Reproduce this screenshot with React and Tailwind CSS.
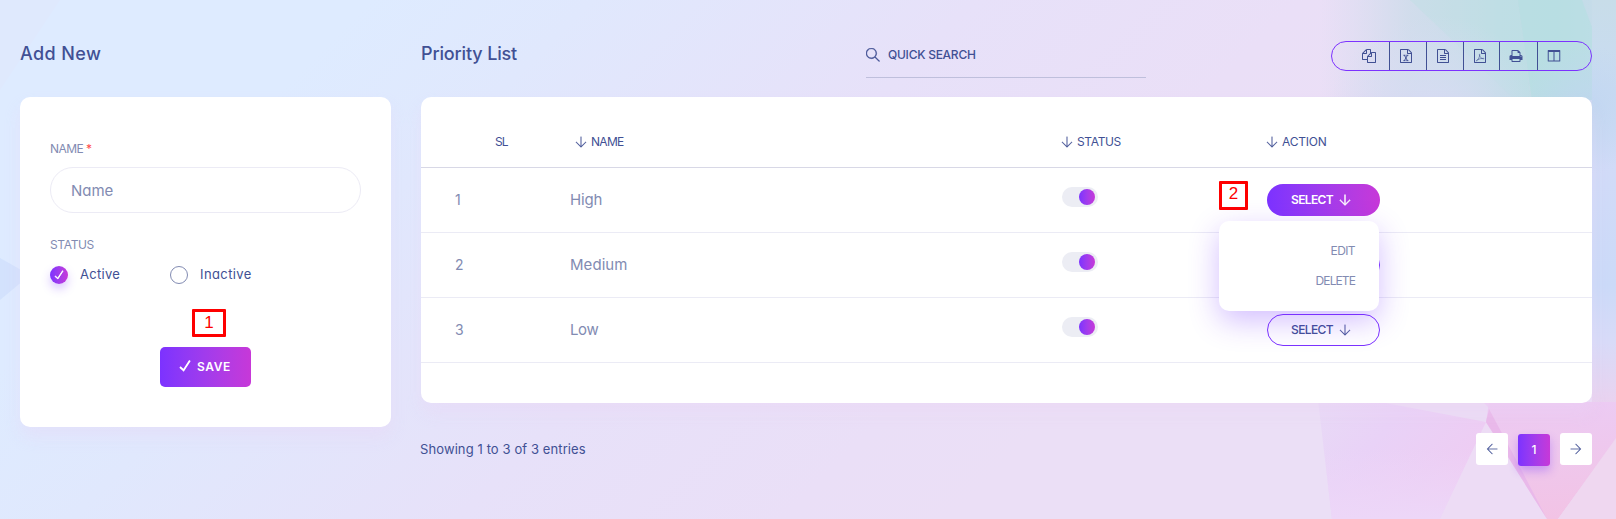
import React from "react";
import { TfiArrowDown, TfiArrowLeft, TfiArrowRight, TfiSearch, TfiCheck } from "react-icons/tfi";

const FILE_PATH =
  "M1596 380q28 28 48 76t20 88v1152q0 40-28 68t-68 28h-1344q-40 0-68-28t-28-68v-1600q0-40 28-68t68-28h896q40 0 88 20t76 48zm-444-244v376h376q-10-29-22-41l-313-313q-12-12-41-22zm384 1528v-1024h-416q-40 0-68-28t-28-68v-416h-768v1536h1280z";

function Glyph({ children }) {
  return (
    <svg viewBox="0 0 1792 1792" className="block h-[14px] w-[14px] fill-current">
      {children}
    </svg>
  );
}

const CopyIcon = () => (
  <Glyph>
    <path d="M1696 384q40 0 68 28t28 68v1216q0 40-28 68t-68 28h-960q-40 0-68-28t-28-68v-288h-544q-40 0-68-28t-28-68v-672q0-40 20-88t48-76l408-408q28-28 76-48t88-20h416q40 0 68 28t28 68v328q68-40 128-40h416zm-544 213l-299 299h299v-299zm-640-384l-299 299h299v-299zm196 647l316-316v-416h-384v416q0 40-28 68t-68 28h-416v640h512v-256q0-40 20-88t48-76zm956 804v-1152h-384v416q0 40-28 68t-68 28h-416v640h896z" />
  </Glyph>
);
const ExcelIcon = () => (
  <Glyph>
    <path d={FILE_PATH} />
    <path d="M560 800h270M930 800h270M560 1490h270M930 1490h270M690 800l390 690M1080 800l-390 690" fill="none" stroke="currentColor" strokeWidth="125" />
  </Glyph>
);
const TextIcon = () => (
  <Glyph>
    <path d={FILE_PATH} />
    <path d="M512 768h768v128h-768zM512 1024h768v128h-768zM512 1280h768v128h-768z" />
  </Glyph>
);
const PdfIcon = () => (
  <Glyph>
    <path d={FILE_PATH} />
    <path d="M440 1530c130-30 400-420 430-800c10-90-60-90-55 0c20 260 250 500 510 530c110 10 100-70 0-70c-300 0-520 80-740 180c-90 50-160 110-145 160z" fill="none" stroke="currentColor" strokeWidth="75" />
  </Glyph>
);
const PrintIcon = () => (
  <Glyph>
    <path d="M448 1536h896v-256h-896v256zm0-640h896v-384h-160q-40 0-68-28t-28-68v-160h-640v640zm1152 64q0-26-19-45t-45-19-45 19-19 45 19 45 45 19 45-19 19-45zm128 0v416q0 13-9.5 22.5t-22.5 9.5h-224v160q0 40-28 68t-68 28h-960q-40 0-68-28t-28-68v-160h-224q-13 0-22.5-9.5t-9.5-22.5v-416q0-79 56.5-135.5t135.5-56.5h64v-544q0-40 28-68t68-28h672q40 0 88 20t76 48l152 152q28 28 48 76t20 88v256h64q79 0 135.5 56.5t56.5 135.5z" />
  </Glyph>
);
const ColumnsIcon = () => (
  <Glyph>
    <path fillRule="evenodd" d="M160 128h1472q66 0 66 66v1340q0 66-66 66h-1472q-66 0-66-66v-1340q0-66 66-66zM222 384v1088h610v-1088zM960 384v1088h610v-1088z" />
  </Glyph>
);

function Backdrop() {
  return (
    <svg className="absolute inset-0 h-full w-full" viewBox="0 0 1616 519" preserveAspectRatio="none">
      <defs>
        <linearGradient id="base" gradientUnits="userSpaceOnUse" x1="180" y1="190" x2="730" y2="740">
          <stop offset="0" stopColor="#deebff" />
          <stop offset="0.2" stopColor="#e0e8fd" />
          <stop offset="0.55" stopColor="#e7e1f9" />
          <stop offset="0.85" stopColor="#eadff7" />
          <stop offset="1" stopColor="#ebdff6" />
        </linearGradient>
        <linearGradient id="teal" x1="0" x2="1" y1="0" y2="0">
          <stop offset="0" stopColor="#d2dcee" stopOpacity="0" />
          <stop offset="0.3" stopColor="#cddcea" stopOpacity="0.85" />
          <stop offset="0.6" stopColor="#c2dde6" />
          <stop offset="0.8" stopColor="#c0dde5" />
          <stop offset="1" stopColor="#c9dbec" />
        </linearGradient>
        <radialGradient id="tealShade" gradientUnits="userSpaceOnUse" cx="1435" cy="125" r="110">
          <stop offset="0" stopColor="#d8dcf4" />
          <stop offset="1" stopColor="#d8dcf4" stopOpacity="0" />
        </radialGradient>
        <radialGradient id="blueShade" gradientUnits="userSpaceOnUse" cx="1585" cy="110" r="65">
          <stop offset="0" stopColor="#c0d6f0" stopOpacity="0.8" />
          <stop offset="1" stopColor="#c0d6f0" stopOpacity="0" />
        </radialGradient>
        <linearGradient id="edge" x1="0" x2="0" y1="0" y2="1">
          <stop offset="0" stopColor="#c8dde9" />
          <stop offset="0.18" stopColor="#c9dbf3" />
          <stop offset="0.32" stopColor="#d1dbf8" />
          <stop offset="0.55" stopColor="#cbdaf8" />
          <stop offset="0.66" stopColor="#d8dbf8" />
          <stop offset="0.78" stopColor="#ead2ef" />
          <stop offset="1" stopColor="#efd3ec" />
        </linearGradient>
        <linearGradient id="violet" x1="0" x2="1" y1="0" y2="0.6">
          <stop offset="0" stopColor="#e8daf6" />
          <stop offset="0.4" stopColor="#e9d2f7" />
          <stop offset="1" stopColor="#efcbf2" />
        </linearGradient>
        <linearGradient id="violetFade" x1="0" x2="0" y1="0" y2="1">
          <stop offset="0.4" stopColor="#edd7f8" stopOpacity="0" />
          <stop offset="1" stopColor="#edd7f8" />
        </linearGradient>
        <linearGradient id="pink" x1="0" x2="0" y1="0" y2="1">
          <stop offset="0" stopColor="#eccbf3" />
          <stop offset="1" stopColor="#f2c3e5" />
        </linearGradient>
      </defs>
      <rect width="1616" height="519" fill="url(#base)" />
      <path d="M0 0H60L0 90Z" fill="#e2e5f9" opacity="0.35" />
      <path d="M0 258L30 275L0 300Z" fill="#cfe0fd" opacity="0.8" />
      <rect x="1320" width="296" height="100" fill="url(#teal)" />
      <path d="M1410 0H1518L1530 97H1512Z" fill="#b9dfe2" opacity="0.35" />
      <rect x="1320" width="272" height="100" fill="url(#tealShade)" />
      <path d="M1518 0H1582L1604 60L1592 100H1532Z" fill="#b0dfe0" opacity="0.45" />
      <rect x="1592" y="0" width="24" height="519" fill="url(#edge)" />
      <path d="M1532 0H1616V200H1532Z" fill="url(#blueShade)" />
      <path d="M1318 400H1490V420L1440 519H1332Z" fill="url(#violet)" />
      <path d="M1318 400H1490V420L1440 519H1332Z" fill="url(#violetFade)" />
      <path d="M1380 402H1483L1489 408L1486 422Z" fill="#ebdcf5" />
      <path d="M1486 422L1440 519H1548Z" fill="#eddcf5" />
      <path d="M1489 402H1616V440L1558 519H1547L1486 422Z" fill="url(#pink)" />
      <path d="M1489 409L1486 422L1547 519L1512 452Z" fill="#e9b9ea" />
      <path d="M1616 438L1558 519H1616Z" fill="#efd7f0" />
    </svg>
  );
}

const TOOLS = [
  { Icon: CopyIcon, box: "w-[57px] pl-[30px]" },
  { Icon: ExcelIcon, box: "w-[37px] border-l pl-[9px]" },
  { Icon: TextIcon, box: "w-[37px] border-l pl-[9px]" },
  { Icon: PdfIcon, box: "w-[36px] border-l pl-[9px]" },
  { Icon: PrintIcon, box: "w-[38px] border-l pl-[9px]" },
  { Icon: ColumnsIcon, box: "w-[54px] border-l pl-[9px]" },
];

const ROWS = [
  { id: 1, name: "High", open: true, spacing: "tracking-[-0.15px]" },
  { id: 2, name: "Medium", open: false, spacing: "tracking-[0.05px]" },
  { id: 3, name: "Low", open: false, spacing: "tracking-[-0.4px]" },
];

const GRID = "grid grid-cols-[150px_491px_205px_325px]";

function SelectMenu() {
  return (
    <div className="absolute top-[53px] left-[798px] z-10 flex h-[90px] w-[160px] flex-col items-end rounded-[10px] bg-white pt-[15px] pr-6 text-[12px] leading-[30px] text-[#828bb2] shadow-[0_10px_30px_rgba(108,39,255,0.3)]">
      <span className="tracking-[-0.6px]">EDIT</span>
      <span className="tracking-[-0.9px]">DELETE</span>
    </div>
  );
}

function Row({ row }) {
  return (
    <div className={`${GRID} relative h-[65px] border-b border-[#ebebf5] text-[15px] text-[#828bb2]`}>
      <span className="pt-[22px] pl-[34px] text-[14px] leading-[20px]">{row.id}</span>
      <span className={`-ml-px pt-[22px] leading-[20px] ${row.spacing}`}>{row.name}</span>
      <div className="pt-[19px]">
        <div className="flex h-5 w-9 items-center justify-end rounded-full bg-[#ecedf4] pr-[3px]">
          <span className="h-4 w-4 rounded-full bg-linear-to-r from-[#7c32ff] to-[#c738d8]" />
        </div>
      </div>
      <div className="pt-4">
        <button
          className={`flex h-8 w-[113px] items-center rounded-full text-[12px] ${
            row.open
              ? "bg-linear-to-r from-[#7c32ff] to-[#c738d8] pl-6 font-semibold tracking-[-0.65px] text-white"
              : "border border-[#7c32ff] pl-[23px] font-medium tracking-[-0.6px] text-[#415094]"
          }`}
        >
          <span className="w-[48px] text-left">SELECT</span>
          <TfiArrowDown className="h-3 w-3" strokeWidth={row.open ? 0.9 : 0.3} />
        </button>
      </div>
      {row.open && (
        <span className="absolute top-[13px] left-[798px] flex h-[29px] w-[29px] items-center justify-center rounded-[1px] border-[3px] border-[#fe0000] pb-[3px] font-['Liberation_Sans',sans-serif] text-[17px] text-[#fe0000]">
          2
        </span>
      )}
      {row.open && <SelectMenu />}
    </div>
  );
}

function Heading({ children, className }) {
  return (
    <span className={`flex items-center gap-[4px] ${className}`}>
      <TfiArrowDown className="h-3 w-3" strokeWidth="0.3" />
      {children}
    </span>
  );
}

export default function App() {
  return (
    <div className="relative h-[519px] w-[1616px] overflow-hidden font-['Inter','Open_Sans',sans-serif] text-[#415094] [font-feature-settings:'cv11']">
      <Backdrop />
      <div className="relative flex gap-[30px] px-5">
        <section className="w-[371px]">
          <h2 className="flex h-[97px] items-start pt-[40px] text-[18px] leading-[28px] font-medium tracking-[0.4px]">Add New</h2>
          <div className="h-[330px] rounded-[10px] bg-white px-[30px] pt-[43px] shadow-[0_10px_15px_rgba(236,208,244,0.3)]">
            <label className="block text-[12px] leading-[18px] tracking-[-0.55px] text-[#828bb2]">
              NAME <span className="text-[#ff4b4b]">*</span>
            </label>
            <input
              placeholder="Name"
              className="mt-[9px] block h-[46px] w-[311px] rounded-full border border-[#ecebf5] bg-white px-5 text-[15px] tracking-[-0.05px] placeholder:text-[#828bb2]"
            />
            <div className="mt-[23px] text-[12px] leading-[18px] tracking-[-0.35px] text-[#828bb2]">STATUS</div>
            <div className="mt-[12px] flex h-[18px] text-[13px] leading-[18px]">
              <span className="flex w-[120px] items-center gap-3 tracking-[0.3px]">
                <span className="flex h-[18px] w-[18px] items-center justify-center rounded-full bg-linear-to-r from-[#7c32ff] to-[#c738d8] text-white shadow-[0_5px_10px_rgba(108,39,255,0.25)]">
                  <TfiCheck className="h-[10px] w-[10px]" strokeWidth="1.6" />
                </span>
                <span className="-mt-[2px]">Active</span>
              </span>
              <span className="flex items-center gap-3 tracking-[0.4px]">
                <span className="h-[18px] w-[18px] rounded-full border border-[#828bb2]" />
                <span className="-mt-[2px]">Inactive</span>
              </span>
            </div>
            <div className="mt-[25px] ml-[142px] flex h-[28px] w-[34px] items-center justify-center rounded-[1px] border-[3px] border-[#fe0000] font-['Liberation_Sans',sans-serif] text-[17px] text-[#fe0000]">
              1
            </div>
            <button className="mt-[10px] ml-[110px] flex h-10 w-[91px] items-center justify-center gap-[6px] rounded-[5px] bg-linear-to-r from-[#7c32ff] to-[#c738d8] pr-px text-[12px] font-semibold tracking-[0.6px] text-white">
              <TfiCheck className="mb-[2px] h-[12px] w-[12px]" strokeWidth="1.6" />
              SAVE
            </button>
          </div>
        </section>

        <section className="w-[1171px]">
          <header className="flex h-[97px] items-start">
            <h2 className="w-[445px] pt-[40px] text-[18px] leading-[28px] font-medium tracking-[-0.15px]">Priority List</h2>
            <div className="mt-[32px] flex h-[46px] w-[280px] items-center gap-[8px] border-b border-[#bfbfdc] text-[12px] font-medium tracking-[-0.25px]">
              <TfiSearch className="h-[14px] w-[14px]" strokeWidth="0.5" />
              QUICK SEARCH
            </div>
            <div className="mt-[41px] ml-auto flex h-[30px] w-[261px] overflow-hidden rounded-full border border-[#7c32ff]">
              {TOOLS.map(({ Icon, box }, i) => (
                <span key={i} className={`flex h-full items-center border-[#415094] ${box}`}>
                  <Icon />
                </span>
              ))}
            </div>
          </header>

          <div className="h-[306px] rounded-[10px] bg-white shadow-[0_10px_15px_rgba(236,208,244,0.3)]">
            <div className={`${GRID} h-[71px] border-b border-[#d8d8e6] pt-[35px] text-[12px] leading-[20px]`}>
              <span className="pl-[74px] tracking-[-0.9px]">SL</span>
              <Heading className="ml-[4px] h-5 tracking-[-0.7px]">NAME</Heading>
              <Heading className="-ml-[1px] h-5 tracking-[-0.35px]">STATUS</Heading>
              <Heading className="-ml-[1px] h-5 tracking-[-0.2px]">ACTION</Heading>
            </div>
            {ROWS.map((row) => (
              <Row key={row.id} row={row} />
            ))}
          </div>

          <footer className="flex items-start pt-[30px]">
            <span className="-ml-px pt-[6px] text-[13px] leading-[20px] tracking-[0.1px]">Showing 1 to 3 of 3 entries</span>
            <nav className="ml-auto flex gap-[10px]">
              <span className="flex h-8 w-8 items-center justify-center rounded-[3px] bg-white">
                <TfiArrowLeft className="h-3 w-3" strokeWidth="0.3" />
              </span>
              <span className="mt-px flex h-8 w-8 items-center justify-center rounded-[3px] bg-linear-to-r from-[#7c32ff] to-[#c738d8] text-[12px] font-medium text-white shadow-[0_5px_10px_rgba(108,39,255,0.3)]">
                1
              </span>
              <span className="flex h-8 w-8 items-center justify-center rounded-[3px] bg-white">
                <TfiArrowRight className="h-3 w-3" strokeWidth="0.3" />
              </span>
            </nav>
          </footer>
        </section>
      </div>
    </div>
  );
}
